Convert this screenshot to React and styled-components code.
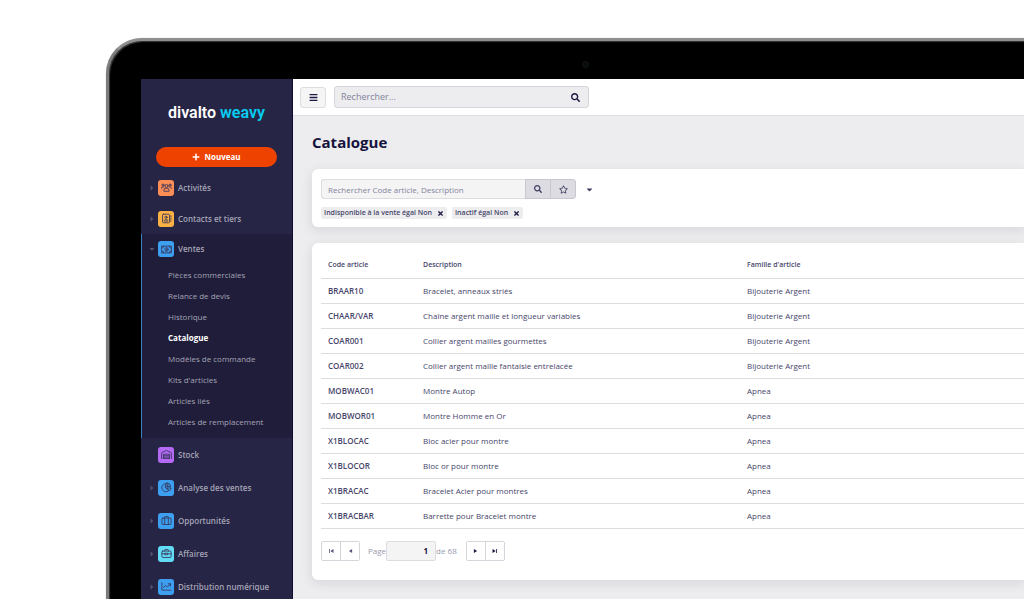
import * as React from "react";
import styled, { createGlobalStyle } from "styled-components";
import { FaBars, FaCaretDown, FaCaretRight, FaPlus, FaRegStar, FaSearch, FaTimes } from "react-icons/fa";

const GlobalStyle = createGlobalStyle`
  * {
    box-sizing: border-box;
  }

  body {
    background: #ffffff;
    color: #47456a;
    font-family: "Open Sans", "Noto Sans", sans-serif;
    font-size: 8px;
    line-height: 12px;
    margin: 0;
    overflow: hidden;
  }

  button, input {
    color: inherit;
    font: inherit;
    margin: 0;
  }

  button {
    cursor: pointer;
    padding: 0;
  }

  a {
    color: inherit;
    text-decoration: none;
  }
`;

const SStage = styled.div`
  display: flex;
  height: 100vh;
  overflow: hidden;
  padding: 38px 0 0 106px;
`;

const SLaptop = styled.div`
  background: #000000;
  border-left: 3px solid #7c7c7c;
  border-top: 3px solid #8f8f8f;
  border-top-left-radius: 36px;
  box-shadow: inset 1px 1px 1px #3a3a3a, 0 0 1px #9a9a9a;
  display: flex;
  flex: 1;
  flex-direction: column;
  min-width: 0;
  padding-left: 32px;
`;

const SBezel = styled.div`
  align-items: center;
  display: flex;
  flex: none;
  height: 38px;
  justify-content: center;
  padding: 8px 0 0 5px;
`;

const SCamera = styled.span`
  background: #080c0a;
  border: 1px solid #121614;
  border-radius: 50%;
  height: 7px;
  width: 7px;
`;

const SScreen = styled.div`
  display: flex;
  flex: 1;
  min-height: 0;
`;

const SSidebar = styled.aside`
  background: #262545;
  border-right: 1px solid #0e0c30;
  color: #a5a4b6;
  flex: none;
  overflow: hidden;
  width: 152px;
`;

const SLogo = styled.a`
  color: #ffffff;
  display: block;
  font-family: Roboto, sans-serif;
  font-size: 16px;
  font-weight: 600;
  line-height: 20px;
  padding: 24px 0 24px 27px;
  white-space: nowrap;

  span {
    color: #08cdf2;
  }
`;

const SNewButton = styled.button`
  align-items: center;
  background: #ee4300;
  border: 0;
  border-radius: 10px;
  color: #ffffff;
  display: flex;
  font-weight: 700;
  gap: 4px;
  height: 20px;
  justify-content: center;
  margin: 0 15px 5px;
  width: 121px;
`;

const SGroup = styled.div`
  background: #1f1d39;
  border-left: 1px solid #3a82c4;
  padding-bottom: 6px;
`;

const SNavItem = styled.a`
  align-items: center;
  display: flex;
  font-weight: 600;
  height: ${({ $tall, $open }) => ($tall ? 33 : $open ? 30 : 31)}px;
  padding-left: ${({ $open }) => ($open ? 6 : 7)}px;
  white-space: nowrap;
`;

const SArrow = styled.span`
  color: #55546d;
  display: flex;
  font-size: 8px;
  visibility: ${({ $hidden }) => ($hidden ? "hidden" : "visible")};
  width: 10px;
`;

const STile = styled.span`
  align-items: center;
  background: ${({ $color }) => $color};
  border-radius: 3px;
  color: #37365c;
  display: flex;
  height: 16px;
  justify-content: center;
  margin-right: 4px;
  width: 16px;

  svg {
    fill: none;
    height: 11px;
    stroke: currentColor;
    stroke-linecap: round;
    stroke-linejoin: round;
    stroke-width: 1.4;
    width: 11px;
  }
`;

const SSubItem = styled.a`
  color: ${({ $active }) => ($active ? "#ffffff" : "#a5a4b6")};
  display: block;
  font-weight: ${({ $active }) => ($active ? 700 : 400)};
  line-height: 21px;
  padding-left: 26px;
  white-space: nowrap;
`;

const SMain = styled.main`
  background: #ededef;
  flex: 1;
  min-width: 0;
`;

const STopBar = styled.header`
  align-items: center;
  background: #ffffff;
  border-bottom: 1px solid #dcdce1;
  display: flex;
  gap: 8px;
  height: 37px;
  padding: 0 7px;
`;

const SMenuButton = styled.button`
  align-items: center;
  background: #f5f5f6;
  border: 1px solid #dcdce1;
  border-radius: 3px;
  color: #1b1942;
  display: flex;
  font-size: 9px;
  height: 21px;
  justify-content: center;
  width: 26px;
`;

const SSearch = styled.form`
  align-items: center;
  background: #ededef;
  border: 1px solid #d5d5db;
  border-radius: 3px;
  display: flex;
  height: 22px;
  width: 255px;

  input {
    background: none;
    border: 0;
    flex: 1;
    font-size: 9px;
    min-width: 0;
    outline: 0;
    padding: 0 6px;
  }

  input::placeholder {
    color: #83829a;
    opacity: 1;
  }

  button {
    background: none;
    border: 0;
    color: #1b1942;
    display: flex;
    font-size: 9px;
    padding: 0 8px;
  }
`;

const SContent = styled.div`
  display: flex;
  flex-direction: column;
  gap: 16px;
  padding: 16px 0 0 19px;
`;

const STitle = styled.h1`
  color: #15133c;
  font-size: 15px;
  font-weight: 700;
  line-height: 21px;
  margin: 0;
`;

const SCard = styled.section`
  background: #ffffff;
  border-radius: 6px 0 0 6px;
  box-shadow: 0 3px 12px rgba(40, 38, 80, 0.12);
  padding: ${({ $table }) => ($table ? "10px 0 19px 9px" : "10px 0 8px 9px")};
`;

const SFilterBar = styled.form`
  align-items: center;
  display: flex;
  height: 20px;
`;

const SFilterInput = styled.input`
  background: #f4f4f5;
  border: 1px solid #dcdce1;
  border-radius: 3px 0 0 3px;
  border-right: 0;
  height: 20px;
  outline: 0;
  padding: 0 6px;
  width: 204px;

  &::placeholder {
    color: #83829a;
    opacity: 1;
  }
`;

const SFilterButton = styled.button`
  align-items: center;
  background: #dcdce2;
  border: 1px solid #c8c8d0;
  border-radius: ${({ $last }) => ($last ? "0 3px 3px 0" : "0")};
  color: #3f3d62;
  display: flex;
  font-size: ${({ $last }) => ($last ? 9 : 8)}px;
  height: 20px;
  justify-content: center;
  margin-right: ${({ $last }) => ($last ? 0 : -1)}px;
  width: 26px;
`;

const SCaretButton = styled.button`
  background: none;
  border: 0;
  color: #3f3d62;
  display: flex;
  font-size: 9px;
  padding: 0 9px;
`;

const SChips = styled.div`
  display: flex;
  gap: 5px;
  margin-top: 8px;
`;

const SChip = styled.span`
  align-items: center;
  background: #ededef;
  border-radius: 2px;
  display: flex;
  font-size: 7px;
  font-weight: 600;
  gap: 5px;
  height: 12px;
  padding: 0 3px;
  white-space: nowrap;

  button {
    background: none;
    border: 0;
    color: #1b1942;
    display: flex;
    font-size: 7px;
  }
`;

const STable = styled.table`
  border-collapse: collapse;
  table-layout: fixed;
  width: 100%;

  th, td {
    border-bottom: 1px solid #dcdce1;
    height: 25px;
    overflow: hidden;
    padding: 0 0 0 7px;
    text-align: left;
    white-space: nowrap;
  }

  th {
    font-size: 7px;
    font-weight: 600;
  }

  td:first-child {
    font-weight: 600;
  }
`;

const SColumn = styled.col`
  width: ${({ $width }) => $width};
`;

const SPager = styled.nav`
  align-items: center;
  color: #9a99ac;
  display: flex;
  margin-top: 12px;
`;

const SPageButtons = styled.div`
  border: 1px solid #d5d5dc;
  border-radius: 2px;
  display: flex;
  height: 20px;
  width: 39px;

  button {
    align-items: center;
    background: #ffffff;
    border: 0;
    color: #1b1942;
    display: flex;
    flex: 1;
    justify-content: center;
  }

  button + button {
    border-left: 1px solid #d5d5dc;
  }

  button:disabled {
    color: #58577a;
  }

  svg {
    fill: currentColor;
    height: 4px;
    width: 5px;
  }
`;

const SPageLabel = styled.label`
  align-items: center;
  display: flex;
  padding: 0 9px 0 8px;

  input {
    background: #f4f4f5;
    border: 1px solid #dcdce1;
    border-radius: 2px;
    color: #15133c;
    font-weight: 700;
    height: 20px;
    outline: 0;
    padding: 0 7px;
    text-align: right;
    width: 50px;
  }
`;

const icons = {
  users: (
    <svg viewBox="0 0 18 18" aria-hidden="true">
      <circle cx="9" cy="6.5" r="2.5" />
      <circle cx="3.2" cy="5" r="1.7" />
      <circle cx="14.8" cy="5" r="1.7" />
      <path d="M4.8 14.5v-1.2a3 3 0 0 1 3-3h2.4a3 3 0 0 1 3 3v1.2zM1 10.5V10a2 2 0 0 1 2-2h1.5M17 10.5V10a2 2 0 0 0-2-2h-1.5" />
    </svg>
  ),
  contact: (
    <svg viewBox="0 0 18 18" aria-hidden="true">
      <rect x="2.5" y="2" width="11.5" height="14" rx="1.5" />
      <circle cx="8.2" cy="7" r="1.8" />
      <path d="M5.2 12.5c0-3 6-3 6 0zM16.2 4.5v2M16.2 8.5v2M16.2 12.5v1" />
    </svg>
  ),
  money: (
    <svg viewBox="0 0 18 18" aria-hidden="true">
      <rect x="1" y="3.5" width="16" height="11" />
      <ellipse cx="9" cy="9" rx="2.6" ry="3.3" />
      <path d="M1 7a3.5 3.5 0 0 0 3.5-3.5M17 7a3.5 3.5 0 0 1-3.5-3.5M1 11a3.5 3.5 0 0 1 3.5 3.5M17 11a3.5 3.5 0 0 0-3.5 3.5M9 7.8v2.4" />
    </svg>
  ),
  warehouse: (
    <svg viewBox="0 0 18 18" aria-hidden="true">
      <path d="M1 15.5V6.8a1.5 1.5 0 0 1 1-1.4l6.4-2.7a1.5 1.5 0 0 1 1.2 0L16 5.4a1.5 1.5 0 0 1 1 1.4v8.7M4 15.5V8.5h10v7M4 11h10M4 13.3h10M4 15.5h10" />
    </svg>
  ),
  pie: (
    <svg viewBox="0 0 18 18" aria-hidden="true">
      <path d="M7.5 2.5a6.8 6.8 0 1 0 5 12L7.5 9.5zM10 1.5v6h6a6.3 6.3 0 0 0-6-6zM10.2 9.8h6.3a6.5 6.5 0 0 1-2 4.2zM7.5 9.5l5-5" />
    </svg>
  ),
  suitcase: (
    <svg viewBox="0 0 18 18" aria-hidden="true">
      <rect x="1.5" y="5" width="15" height="10.5" rx="1.5" />
      <path d="M6 15.5V3.5a1 1 0 0 1 1-1h4a1 1 0 0 1 1 1v12" />
    </svg>
  ),
  briefcase: (
    <svg viewBox="0 0 18 18" aria-hidden="true">
      <rect x="1.5" y="5" width="15" height="10.5" rx="1.5" />
      <path d="M6 5V3.5a1 1 0 0 1 1-1h4a1 1 0 0 1 1 1V5M1.5 9.5H7M11 9.5h5.5M7 8.5h4v2.5H7z" />
    </svg>
  ),
  chart: (
    <svg viewBox="0 0 18 18" aria-hidden="true">
      <path d="M1.5 3v12h15M4.5 10.5l3-3.5 3 3L15 5M11.8 4.5h3.7v3.7" />
    </svg>
  ),
};

const topItems = [
  { label: "Activités", icon: "users", color: "#fb8d55" },
  { label: "Contacts et tiers", icon: "contact", color: "#fbb144" },
];

const bottomItems = [
  { label: "Stock", icon: "warehouse", color: "#b56af6", leaf: true },
  { label: "Analyse des ventes", icon: "pie", color: "#3c9ff0" },
  { label: "Opportunités", icon: "suitcase", color: "#3c9ff0" },
  { label: "Affaires", icon: "briefcase", color: "#62dcf5" },
  { label: "Distribution numérique", icon: "chart", color: "#3c9ff0" },
];

const salesItems = [
  "Pièces commerciales",
  "Relance de devis",
  "Historique",
  "Catalogue",
  "Modèles de commande",
  "Kits d'articles",
  "Articles liés",
  "Articles de remplacement",
];

const filters = ["Indisponible à la vente égal Non", "Inactif égal Non"];

const articles = [
  ["BRAAR10", "Bracelet, anneaux striés", "Bijouterie Argent"],
  ["CHAAR/VAR", "Chaîne argent maille et longueur variables", "Bijouterie Argent"],
  ["COAR001", "Collier argent mailles gourmettes", "Bijouterie Argent"],
  ["COAR002", "Collier argent maille fantaisie entrelacée", "Bijouterie Argent"],
  ["MOBWAC01", "Montre Autop", "Apnea"],
  ["MOBWOR01", "Montre Homme en Or", "Apnea"],
  ["X1BLOCAC", "Bloc acier pour montre", "Apnea"],
  ["X1BLOCOR", "Bloc or pour montre", "Apnea"],
  ["X1BRACAC", "Bracelet Acier pour montres", "Apnea"],
  ["X1BRACBAR", "Barrette pour Bracelet montre", "Apnea"],
];

const NavItem = ({ item, tall, open }) => (
  <SNavItem href="#" $tall={tall} $open={open}>
    <SArrow $hidden={item.leaf}>{open ? <FaCaretDown /> : <FaCaretRight />}</SArrow>
    <STile $color={item.color}>{icons[item.icon]}</STile>
    {item.label}
  </SNavItem>
);

const Sidebar = () => (
  <SSidebar>
    <SLogo href="#">
      divalto <span>weavy</span>
    </SLogo>
    <SNewButton type="button">
      <FaPlus />
      Nouveau
    </SNewButton>
    <nav>
      {topItems.map((item) => (
        <NavItem key={item.label} item={item} />
      ))}
      <SGroup>
        <NavItem item={{ label: "Ventes", icon: "money", color: "#3c9ff0" }} open />
        {salesItems.map((label) => (
          <SSubItem key={label} href="#" $active={label === "Catalogue"}>
            {label}
          </SSubItem>
        ))}
      </SGroup>
      {bottomItems.map((item) => (
        <NavItem key={item.label} item={item} tall />
      ))}
    </nav>
  </SSidebar>
);

const Filters = () => (
  <SCard>
    <SFilterBar>
      <SFilterInput
        type="text"
        aria-label="Rechercher Code article, Description"
        placeholder="Rechercher Code article, Description"
      />
      <SFilterButton type="button" aria-label="Rechercher">
        <FaSearch />
      </SFilterButton>
      <SFilterButton type="button" aria-label="Favoris" $last>
        <FaRegStar />
      </SFilterButton>
      <SCaretButton type="button" aria-label="Plus de filtres">
        <FaCaretDown />
      </SCaretButton>
    </SFilterBar>
    <SChips>
      {filters.map((label) => (
        <SChip key={label}>
          {label}
          <button type="button" aria-label={`Retirer ${label}`}>
            <FaTimes />
          </button>
        </SChip>
      ))}
    </SChips>
  </SCard>
);

const Pager = () => (
  <SPager aria-label="Pagination">
    <SPageButtons>
      <button type="button" aria-label="Première page" disabled>
        <svg viewBox="0 0 6 5"><path d="M0 0h1v5H0zM5.5 0v5L1.5 2.5z" /></svg>
      </button>
      <button type="button" aria-label="Page précédente" disabled>
        <svg viewBox="0 0 6 5"><path d="M5 0v5L1 2.5z" /></svg>
      </button>
    </SPageButtons>
    <SPageLabel>
      Page
      <input type="text" defaultValue="1" />
      de 68
    </SPageLabel>
    <SPageButtons>
      <button type="button" aria-label="Page suivante">
        <svg viewBox="0 0 6 5"><path d="M1 0v5l4-2.5z" /></svg>
      </button>
      <button type="button" aria-label="Dernière page">
        <svg viewBox="0 0 6 5"><path d="M5 0h1v5H5zM.5 0v5l4-2.5z" /></svg>
      </button>
    </SPageButtons>
  </SPager>
);

const Articles = () => (
  <SCard $table>
    <STable>
      <colgroup>
        <SColumn $width="95px" />
        <SColumn $width="324px" />
        <SColumn $width="auto" />
      </colgroup>
      <thead>
        <tr>
          <th>Code article</th>
          <th>Description</th>
          <th>Famille d'article</th>
        </tr>
      </thead>
      <tbody>
        {articles.map(([code, description, family]) => (
          <tr key={code}>
            <td>{code}</td>
            <td>{description}</td>
            <td>{family}</td>
          </tr>
        ))}
      </tbody>
    </STable>
    <Pager />
  </SCard>
);

const App = () => {
  return (
    <React.Fragment>
      <GlobalStyle />
      <SStage>
        <SLaptop>
          <SBezel>
            <SCamera />
          </SBezel>
          <SScreen>
            <Sidebar />
            <SMain>
              <STopBar>
                <SMenuButton type="button" aria-label="Menu">
                  <FaBars />
                </SMenuButton>
                <SSearch>
                  <input type="text" aria-label="Rechercher" placeholder="Rechercher..." />
                  <button type="button" aria-label="Lancer la recherche">
                    <FaSearch />
                  </button>
                </SSearch>
              </STopBar>
              <SContent>
                <STitle>Catalogue</STitle>
                <Filters />
                <Articles />
              </SContent>
            </SMain>
          </SScreen>
        </SLaptop>
      </SStage>
    </React.Fragment>
  );
};

export default App;
